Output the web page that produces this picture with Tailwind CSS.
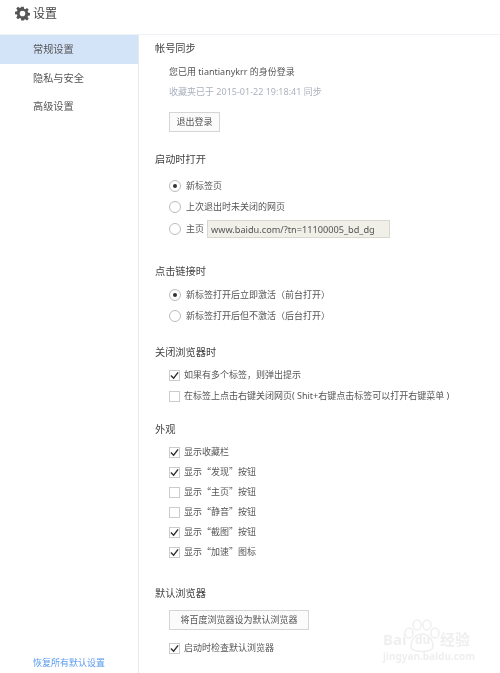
<!DOCTYPE html>
<html lang="zh-CN">
<head>
  <meta charset="UTF-8" />
  <title>设置</title>
  <script src="https://cdn.jsdelivr.net/npm/@tailwindcss/browser@4"></script>
</head>
<body class="bg-white text-[#555] text-[9px] font-['Noto_Sans','Noto_Sans_CJK_SC',sans-serif]">
<div class="relative w-[500px] h-[673px] overflow-hidden flex flex-col blur-[0.3px]">

  <!-- Title bar -->
  <header class="h-[35px] shrink-0 border-b border-[#eef2f7] flex items-center pl-[15px] gap-[3px] pb-[7px]">
    <svg class="w-[15px] h-[15px] text-[#555]" viewBox="0 0 24 24" fill="currentColor">
      <path fill-rule="evenodd" d="M10 1h4l.6 3.2 1.9.8 2.7-1.9 2.8 2.8-1.9 2.7.8 1.9 3.1.5v4l-3.1.6-.8 1.9 1.9 2.7-2.8 2.8-2.7-1.9-1.9.8L14 23h-4l-.6-3.1-1.9-.8-2.7 1.9L2 18.2l1.9-2.7-.8-1.9L0 13V9l3.1-.5.8-1.9L2 3.9l2.8-2.8 2.7 1.9 1.9-.8L10 1zm2 6.5a4.5 4.5 0 1 0 0 9 4.5 4.5 0 0 0 0-9z"/>
    </svg>
    <span class="text-[12px] text-[#444]">设置</span>
  </header>

  <div class="flex flex-1 min-h-0">
    <!-- Sidebar -->
    <aside class="w-[139px] shrink-0 border-r border-[#e8e8e8] flex flex-col text-[#555] text-[10.2px]">
      <div class="h-[29px] pl-[33px] flex items-center bg-[#d3e3f8]">常规设置</div>
      <div class="h-[29px] pl-[33px] flex items-center">隐私与安全</div>
      <div class="h-[28px] pl-[33px] flex items-center">高级设置</div>
      <a class="mt-auto h-[20px] pl-[33px] flex items-center text-[9px] text-[#5a9bf0]">恢复所有默认设置</a>
    </aside>

    <!-- Settings -->
    <main class="flex-1 pl-[16px] pt-[4px]">
      <section>
        <h2 class="h-5 flex items-center text-[10.2px] text-[#444]">帐号同步</h2>
        <div class="ml-[14px]">
          <div class="mt-[3px] h-5 flex items-center whitespace-pre">您已用 tiantianykrr 的身份登录</div>
          <div class="h-5 flex items-center whitespace-pre text-[#aab2bd]">收藏夹已于 2015-01-22 19:18:41 同步</div>
          <button class="mt-[10px] w-[51px] h-5 border border-[#d5d5d5] bg-[#fbfbfb] flex items-center justify-center">退出登录</button>
        </div>
      </section>

      <section class="mt-[18px]">
        <h2 class="h-5 flex items-center text-[10.2px] text-[#444]">启动时打开</h2>
        <div class="ml-[14px] mt-[6px] flex flex-col">
          <label class="h-5 flex items-center gap-[5px]">
            <span class="w-[12px] h-[12px] rounded-full border border-[#bbb] flex items-center justify-center"><span class="w-[4px] h-[4px] rounded-full bg-[#333]"></span></span>新标签页
          </label>
          <label class="mt-[1px] h-5 flex items-center gap-[5px]">
            <span class="w-[12px] h-[12px] rounded-full border border-[#bbb]"></span>上次退出时未关闭的网页
          </label>
          <label class="mt-[2px] h-5 flex items-center gap-[5px]">
            <span class="w-[12px] h-[12px] rounded-full border border-[#bbb]"></span>主页
            <input class="-ml-[2px] w-[183px] h-[18px] border border-[#d8d8d0] bg-[#f0f0e9] px-[3px] text-[9.2px] text-[#555]" value="www.baidu.com/?tn=11100005_bd_dg" />
          </label>
        </div>
      </section>

      <section class="mt-[23px]">
        <h2 class="h-5 flex items-center text-[10.2px] text-[#444]">点击链接时</h2>
        <div class="ml-[14px] mt-[3px] flex flex-col">
          <label class="h-5 flex items-center gap-[5px]">
            <span class="w-[12px] h-[12px] rounded-full border border-[#bbb] flex items-center justify-center"><span class="w-[4px] h-[4px] rounded-full bg-[#333]"></span></span>新标签打开后立即激活（前台打开）
          </label>
          <label class="mt-[1px] h-5 flex items-center gap-[5px]">
            <span class="w-[12px] h-[12px] rounded-full border border-[#bbb]"></span>新标签打开后但不激活（后台打开）
          </label>
        </div>
      </section>

      <section class="mt-[17px]">
        <h2 class="h-5 flex items-center text-[10.2px] text-[#444]">关闭浏览器时</h2>
        <div class="ml-[14px] mt-[2px] flex flex-col">
          <label class="h-5 flex items-center gap-[4px]">
            <span class="w-[11px] h-[11px] border border-[#ccc] flex items-center justify-center"><svg class="w-[9px] h-[9px]" viewBox="0 0 10 10" fill="none" stroke="#333" stroke-width="1.6"><path d="M1 5l3 3 5-6.5"/></svg></span>如果有多个标签，则弹出提示
          </label>
          <label class="mt-[1px] h-5 flex items-center gap-[4px]">
            <span class="w-[11px] h-[11px] border border-[#ccc]"></span><span class="whitespace-pre">在标签上点击右键关闭网页( Shit+右键点击标签可以打开右键菜单 )</span>
          </label>
        </div>
      </section>

      <section class="mt-[14px]">
        <h2 class="h-5 flex items-center text-[10.2px] text-[#444]">外观</h2>
        <div class="ml-[14px] mt-[2px] flex flex-col font-['Noto_Sans_CJK_SC',sans-serif]">
          <label class="h-5 flex items-center gap-[4px]">
            <span class="w-[11px] h-[11px] border border-[#ccc] flex items-center justify-center"><svg class="w-[9px] h-[9px]" viewBox="0 0 10 10" fill="none" stroke="#333" stroke-width="1.6"><path d="M1 5l3 3 5-6.5"/></svg></span>显示收藏栏
          </label>
          <label class="h-5 flex items-center gap-[4px]">
            <span class="w-[11px] h-[11px] border border-[#ccc] flex items-center justify-center"><svg class="w-[9px] h-[9px]" viewBox="0 0 10 10" fill="none" stroke="#333" stroke-width="1.6"><path d="M1 5l3 3 5-6.5"/></svg></span>显示“发现”按钮
          </label>
          <label class="h-5 flex items-center gap-[4px]">
            <span class="w-[11px] h-[11px] border border-[#ccc]"></span>显示“主页”按钮
          </label>
          <label class="h-5 flex items-center gap-[4px]">
            <span class="w-[11px] h-[11px] border border-[#ccc]"></span>显示“静音”按钮
          </label>
          <label class="h-5 flex items-center gap-[4px]">
            <span class="w-[11px] h-[11px] border border-[#ccc] flex items-center justify-center"><svg class="w-[9px] h-[9px]" viewBox="0 0 10 10" fill="none" stroke="#333" stroke-width="1.6"><path d="M1 5l3 3 5-6.5"/></svg></span>显示“截图”按钮
          </label>
          <label class="h-5 flex items-center gap-[4px]">
            <span class="w-[11px] h-[11px] border border-[#ccc] flex items-center justify-center"><svg class="w-[9px] h-[9px]" viewBox="0 0 10 10" fill="none" stroke="#333" stroke-width="1.6"><path d="M1 5l3 3 5-6.5"/></svg></span>显示“加速”图标
          </label>
        </div>
      </section>

      <section class="mt-[22px]">
        <h2 class="h-5 flex items-center text-[10.2px] text-[#444]">默认浏览器</h2>
        <div class="ml-[14px] flex flex-col">
          <button class="mt-[6px] w-[140px] h-5 border border-[#d5d5d5] bg-[#fbfbfb] flex items-center justify-center">将百度浏览器设为默认浏览器</button>
          <label class="mt-[8px] h-5 flex items-center gap-[4px]">
            <span class="w-[11px] h-[11px] border border-[#ccc] flex items-center justify-center"><svg class="w-[9px] h-[9px]" viewBox="0 0 10 10" fill="none" stroke="#333" stroke-width="1.6"><path d="M1 5l3 3 5-6.5"/></svg></span>启动时检查默认浏览器
          </label>
        </div>
      </section>
    </main>
  </div>

  <!-- Watermark -->
  <div class="absolute left-[383px] top-[619px] w-[92px] h-[44px] text-[#efefef] leading-none">
    <svg class="absolute left-[20px] top-0 w-[37px] h-[34px]" viewBox="0 0 37 34" fill="none" stroke="currentColor" stroke-width="1.5">
      <ellipse cx="6" cy="14" rx="4" ry="5"/><ellipse cx="14" cy="6" rx="4" ry="5"/><ellipse cx="24" cy="6" rx="4" ry="5"/><ellipse cx="32" cy="14" rx="4" ry="5"/><path d="M8 28c0-8 5-13 11-13s11 5 11 13c0 6-22 6-22 0z"/>
    </svg>
    <div class="absolute left-0 top-[11px] text-[15px] leading-[18px] font-bold">Bai</div>
    <div class="absolute left-[32px] top-[14px] text-[12px] leading-[14px] font-bold">du</div>
    <div class="absolute left-[57px] top-[11px] text-[15px] leading-[18px] font-bold">经验</div>
    <div class="absolute left-0 top-[31px] text-[10px] leading-[12px] font-bold">jingyan.baidu.com</div>
  </div>
</div>
</body>
</html>
